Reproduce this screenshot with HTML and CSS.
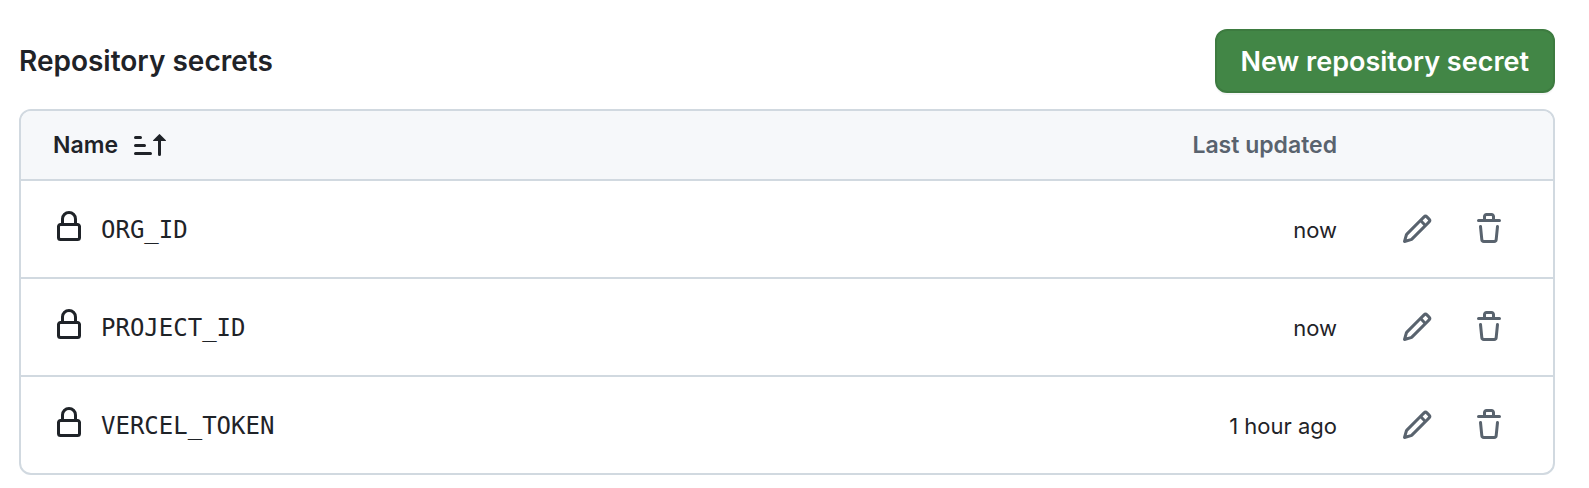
FILE: index.html
```
<!DOCTYPE html>
<html lang="en">
<head>
<meta charset="utf-8">
<title>Repository secrets</title>
<link rel="stylesheet" href="styles.css">
</head>
<body>
<svg class="sprite" aria-hidden="true">
  <symbol id="lock" viewBox="0 0 16 16"><path d="M4 4a4 4 0 0 1 8 0v2h.25c.966 0 1.75.784 1.75 1.75v5.5A1.75 1.75 0 0 1 12.25 15h-8.5A1.75 1.75 0 0 1 2 13.25v-5.5C2 6.784 2.784 6 3.75 6H4Zm8.25 3.5h-8.5a.25.25 0 0 0-.25.25v5.5c0 .138.112.25.25.25h8.5a.25.25 0 0 0 .25-.25v-5.5a.25.25 0 0 0-.25-.25ZM10.5 6V4a2.5 2.5 0 1 0-5 0v2Z"/></symbol>
  <symbol id="pencil" viewBox="0 0 16 16"><path d="M11.013 1.427a1.75 1.75 0 0 1 2.474 0l1.086 1.086a1.75 1.75 0 0 1 0 2.474l-8.61 8.61c-.21.21-.47.364-.756.445l-3.251.93a.75.75 0 0 1-.927-.928l.929-3.25c.081-.286.235-.547.445-.758l8.61-8.61Zm.176 4.823L9.75 4.81l-6.286 6.287a.253.253 0 0 0-.064.108l-.558 1.953 1.953-.558a.253.253 0 0 0 .108-.064Zm1.238-3.763a.25.25 0 0 0-.354 0L10.811 3.75l1.439 1.44 1.263-1.263a.25.25 0 0 0 0-.354Z"/></symbol>
  <symbol id="trash" viewBox="0 0 16 16"><path d="M11 1.75V3h2.25a.75.75 0 0 1 0 1.5H2.75a.75.75 0 0 1 0-1.5H5V1.75C5 .784 5.784 0 6.75 0h2.5C10.216 0 11 .784 11 1.75ZM4.496 6.675l.66 6.6a.25.25 0 0 0 .249.225h5.19a.25.25 0 0 0 .249-.225l.66-6.6a.75.75 0 0 1 1.492.149l-.66 6.6A1.748 1.748 0 0 1 10.595 15h-5.19a1.75 1.75 0 0 1-1.741-1.575l-.66-6.6a.75.75 0 1 1 1.492-.15ZM6.5 1.75V3h3V1.75a.25.25 0 0 0-.25-.25h-2.5a.25.25 0 0 0-.25.25Z"/></symbol>
  <symbol id="sort" viewBox="0 0 16 16"><path d="m12.927 2.573 3 3A.25.25 0 0 1 15.75 6H13.5v6.75a.75.75 0 0 1-1.5 0V6H9.75a.25.25 0 0 1-.177-.427l3-3a.25.25 0 0 1 .354 0ZM0 12.25a.75.75 0 0 1 .75-.75h7.5a.75.75 0 0 1 0 1.5H.75a.75.75 0 0 1-.75-.75Zm0-4a.75.75 0 0 1 .75-.75h4.5a.75.75 0 0 1 0 1.5H.75A.75.75 0 0 1 0 8.25Zm0-4a.75.75 0 0 1 .75-.75h2.5a.75.75 0 0 1 0 1.5H.75A.75.75 0 0 1 0 4.25Z"/></symbol>
</svg>
<main class="page">
  <header class="head">
    <h2 class="title">Repository secrets</h2>
    <button class="new-secret" type="button">New repository secret</button>
  </header>
  <div class="card">
    <table class="secrets">
      <thead>
        <tr>
          <th class="name" scope="col" aria-sort="ascending"><button class="sort" type="button">Name<svg class="icon"><use href="#sort"/></svg></button></th>
          <th class="updated" scope="col">Last updated</th>
          <th class="actions" scope="col" aria-label="Actions"></th>
        </tr>
      </thead>
      <tbody>
        <tr>
          <td class="name"><div class="secret"><svg class="icon lock"><use href="#lock"/></svg><code>ORG_ID</code></div></td>
          <td class="updated">now</td>
          <td class="actions"><div class="tools"><button class="tool" type="button" aria-label="Edit ORG_ID"><svg class="icon"><use href="#pencil"/></svg></button><button class="tool" type="button" aria-label="Delete ORG_ID"><svg class="icon"><use href="#trash"/></svg></button></div></td>
        </tr>
        <tr>
          <td class="name"><div class="secret"><svg class="icon lock"><use href="#lock"/></svg><code>PROJECT_ID</code></div></td>
          <td class="updated">now</td>
          <td class="actions"><div class="tools"><button class="tool" type="button" aria-label="Edit PROJECT_ID"><svg class="icon"><use href="#pencil"/></svg></button><button class="tool" type="button" aria-label="Delete PROJECT_ID"><svg class="icon"><use href="#trash"/></svg></button></div></td>
        </tr>
        <tr>
          <td class="name"><div class="secret"><svg class="icon lock"><use href="#lock"/></svg><code>VERCEL_TOKEN</code></div></td>
          <td class="updated">1 hour ago</td>
          <td class="actions"><div class="tools"><button class="tool" type="button" aria-label="Edit VERCEL_TOKEN"><svg class="icon"><use href="#pencil"/></svg></button><button class="tool" type="button" aria-label="Delete VERCEL_TOKEN"><svg class="icon"><use href="#trash"/></svg></button></div></td>
        </tr>
      </tbody>
    </table>
  </div>
</main>
</body>
</html>
```
FILE: styles.css
```
* { box-sizing: border-box; }
body {
  margin: 0;
  background: #fff;
  color: #1f2328;
  font-family: Inter, "Liberation Sans", sans-serif;
  font-size: 22px;
  line-height: 32px;
}
button { font: inherit; color: inherit; background: none; border: 0; padding: 0; cursor: pointer; }
.sprite { display: none; }
.icon { display: block; flex: none; width: 32px; height: 32px; fill: currentColor; }
.page { padding: 29px 34px 13px 19px; }
.head { display: flex; align-items: center; justify-content: space-between; margin-bottom: 16px; }
.title { margin: 0; font-size: 28px; font-weight: 600; }
.new-secret {
  padding: 15px 24px 13px;
  border: 2px solid #3d7b40;
  border-radius: 12px;
  background: #428646;
  color: #fff;
  font-size: 27px;
  font-weight: 600;
  box-shadow: 0 2px 0 rgba(31, 35, 40, 0.04);
}
.card { border: 2px solid #d1d9e0; border-radius: 12px; overflow: hidden; }
.secrets { width: 100%; border-collapse: separate; border-spacing: 0; }
th, td { padding: 0; vertical-align: middle; }
th { height: 68px; background: #f6f8fa; font-size: 23px; font-weight: 600; }
td { height: 98px; border-top: 2px solid #d1d9e0; }
.name { padding-left: 32px; text-align: left; }
.updated { text-align: right; white-space: nowrap; }
td.updated { padding-top: 2px; }
th.updated { color: #59636e; }
.actions { width: 216px; padding-right: 48px; }
.sort { display: flex; align-items: center; gap: 16px; }
.secret { display: flex; align-items: flex-end; gap: 16px; }
.lock { margin-bottom: 4px; }
.secret code { font-family: "DejaVu Sans Mono", monospace; font-size: 24px; line-height: 34px; }
.tools { display: flex; justify-content: flex-end; gap: 40px; color: #59636e; }
```
